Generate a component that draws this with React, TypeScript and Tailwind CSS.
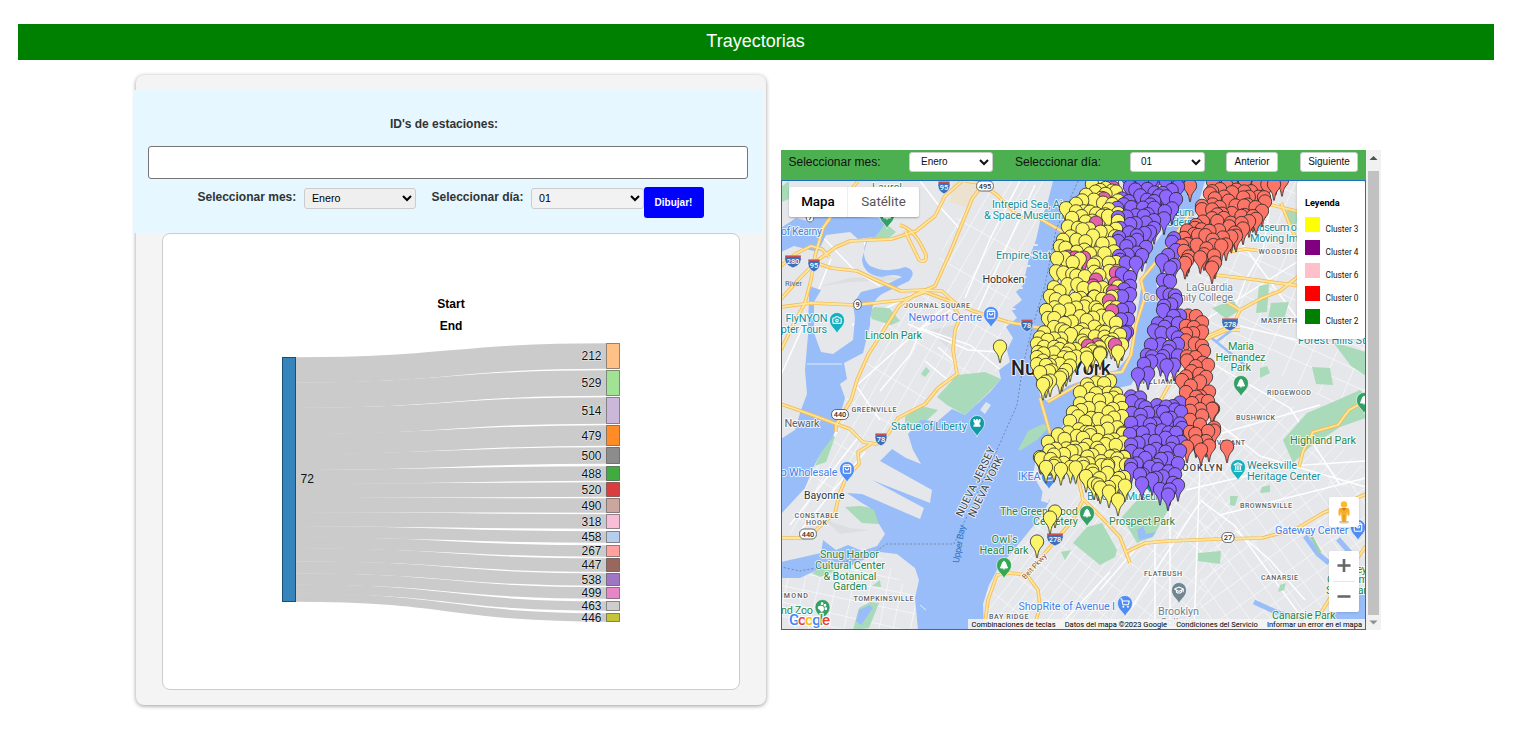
import React from "react";
import { Camera, GraduationCap, Landmark, PawPrint, ShoppingBag, ShoppingCart, TreePine } from "lucide-react";

type Span = [number, number, number];
type Pin = { x: number; y: number; c: string };

const YELLOW = "#fdf569";
const PURPLE = "#8e67fd";
const RED = "#fd7567";
const PINK = "#e661ac";

const nodes: [string, number, number, string][] = [
  ["212", 343.5, 368.5, "#ffc185"],
  ["529", 370.5, 395.5, "#a2e295"],
  ["514", 397.5, 423.5, "#cbb8d9"],
  ["479", 425.5, 445.5, "#ff8c26"],
  ["500", 447.5, 463.5, "#8c8c8c"],
  ["488", 466.5, 480.5, "#41aa41"],
  ["520", 482.5, 496.5, "#da3d3e"],
  ["490", 498.5, 512.5, "#caa69f"],
  ["318", 514.5, 528.5, "#f8bdd7"],
  ["458", 531.5, 542.5, "#b6ceeb"],
  ["267", 545.5, 556.5, "#ffa2a0"],
  ["447", 558.5, 571.5, "#98675d"],
  ["538", 573.5, 585.5, "#9f76c4"],
  ["499", 587.5, 598.5, "#e685c8"],
  ["463", 601.5, 610.5, "#cdcdcd"],
  ["446", 613.5, 621.5, "#c3c438"],
];

function Sankey() {
  const total = nodes.reduce((s, n) => s + n[2] - n[1], 0);
  let at = 357.5;
  const links = nodes.map(([id, a, b]) => {
    const h = ((b - a) * 244) / total;
    const s = at + h / 2;
    const e = (a + b) / 2;
    at += h;
    return <path key={id} d={`M296 ${s}C451 ${s} 451 ${e} 606 ${e}`} fill="none" stroke="#cbcbcb" strokeWidth={h + 0.4} />;
  });
  return (
    <svg className="block h-[284px] w-[342px]" viewBox="280 340 342 284" fontFamily="'Liberation Sans', Arial, sans-serif" fontSize="12">
      {links}
      <rect x="282.5" y="357.5" width="13" height="244" fill="#3585bc" stroke="#165078" />
      <text x="300.5" y="483" fill="#111">72</text>
      {nodes.map(([id, a, b, c]) => (
        <g key={id}>
          <rect x="606.5" y={a} width="13" height={b - a} fill={c} stroke="#000" strokeOpacity="0.42" />
          <text x="601.5" y={(a + b) / 2 + 4.2} textAnchor="end" fill="#111" stroke="#fff" strokeWidth="1.2" strokeOpacity="0.6" paintOrder="stroke">
            {id}
          </text>
        </g>
      ))}
    </svg>
  );
}

const regions: { c: string; rows: Span[] }[] = [
  {
    c: YELLOW,
    rows: [
      [181, 1095, 1112], [188, 1092, 1112], [195, 1086, 1116], [204, 1076, 1118], [212, 1066, 1118], [220, 1072, 1118],
      [230, 1068, 1116], [240, 1063, 1115], [250, 1060, 1114], [262, 1057, 1116], [275, 1056, 1116], [288, 1054, 1118],
      [300, 1050, 1118], [310, 1046, 1116], [320, 1048, 1116], [330, 1044, 1116], [338, 1040, 1120], [346, 1037, 1122],
      [353, 1038, 1100], [360, 1037, 1070], [367, 1037, 1066], [374, 1040, 1062], [382, 1043, 1050],
    ],
  },
  {
    c: YELLOW,
    rows: [
      [381, 1087, 1110], [390, 1080, 1116], [400, 1080, 1120], [410, 1073, 1122], [420, 1070, 1122], [430, 1068, 1123],
      [438, 1058, 1123], [446, 1048, 1123], [454, 1040, 1124], [461, 1041, 1124], [467, 1046, 1126], [476, 1086, 1124], [484, 1094, 1116],
    ],
  },
  {
    c: PURPLE,
    rows: [
      [181, 1128, 1188], [190, 1130, 1178], [199, 1122, 1176], [208, 1117, 1172], [217, 1118, 1164], [226, 1120, 1154],
      [235, 1119, 1150], [244, 1118, 1146], [254, 1119, 1142], [263, 1120, 1136], [275, 1122, 1130], [286, 1124, 1130],
      [298, 1122, 1130], [310, 1122, 1129], [322, 1121, 1128], [334, 1125, 1127],
    ],
  },
  {
    c: PURPLE,
    rows: [
      [242, 1172, 1174], [252, 1168, 1176], [264, 1162, 1174], [284, 1163, 1170], [294, 1163, 1175], [304, 1164, 1176], [314, 1163, 1180], [324, 1158, 1178],
      [334, 1154, 1178], [344, 1151, 1178], [353, 1147, 1178], [362, 1144, 1174], [371, 1138, 1148],
    ],
  },
  {
    c: PURPLE,
    rows: [
      [395, 1131, 1140], [404, 1132, 1180], [413, 1132, 1181], [422, 1131, 1180], [432, 1130, 1182], [442, 1131, 1181],
      [452, 1131, 1180], [462, 1131, 1178], [471, 1131, 1175], [480, 1142, 1173], [488, 1160, 1178],
    ],
  },
  {
    c: RED,
    rows: [
      [181, 1213, 1282], [188, 1212, 1274], [196, 1210, 1264], [204, 1202, 1265], [213, 1202, 1262], [222, 1196, 1256],
      [230, 1187, 1243], [238, 1184, 1236], [246, 1182, 1226], [254, 1184, 1204], [264, 1185, 1187],
    ],
  },
  {
    c: RED,
    rows: [
      [315, 1188, 1196], [324, 1186, 1202], [334, 1186, 1202], [344, 1186, 1202], [354, 1187, 1204], [364, 1187, 1208],
      [374, 1186, 1206], [384, 1182, 1200], [394, 1186, 1209], [404, 1192, 1208], [413, 1190, 1212], [422, 1190, 1200], [431, 1190, 1214], [440, 1196, 1206],
    ],
  },
];

const singles: Pin[] = [
  ...[[1000, 347], [1055, 512], [1050, 518], [1037, 542], [1118, 352], [1100, 353], [1087, 358], [1070, 366], [1060, 378], [1046, 382], [1098, 485], [1109, 492], [1118, 500], [1125, 486]].map(([x, y]) => ({ x, y, c: YELLOW })),
  ...[[1113, 188], [1104, 199], [1096, 223], [1068, 257], [1075, 258], [1084, 258], [1096, 280], [1093, 286], [1116, 273], [1115, 284], [1094, 297], [1113, 292], [1109, 301], [1112, 311], [1088, 346], [1097, 345], [1115, 345]].map(([x, y]) => ({ x, y, c: PINK })),
  ...[[1168, 495], [1190, 186]].map(([x, y]) => ({ x, y, c: x < 1180 ? PURPLE : RED })),
  ...[[1214, 256], [1215, 263], [1212, 268], [1187, 447], [1201, 450], [1209, 446], [1227, 447], [1213, 409], [1214, 431]].map(([x, y]) => ({ x, y, c: RED })),
];

function buildPins(): Pin[] {
  let seed = 17;
  const rnd = () => {
    seed = (seed * 16807) % 2147483647;
    return seed / 2147483647 - 0.5;
  };
  const out: Pin[] = [];
  for (const { c, rows } of regions) {
    for (const [y, a, b] of rows) {
      const n = Math.max(1, Math.round((b - a) / 8));
      for (let i = 0; i <= n; i++) {
        const edge = i === 0 || i === n;
        out.push({ x: a + ((b - a) * i) / n + (edge ? 0 : rnd() * 6), y: y + rnd() * 8, c });
      }
    }
  }
  return [...out, ...singles].sort((p, q) => p.y - q.y);
}
const pins = buildPins();

const water = [
  "M1053 181L1047 205L1040 222L1036 240L1029 258L1023 285L1016 292L1022 300L1011 309L1017 318L1006 327L1013 338L1007 350L1010 362L999 370L1001 379L990 392L965 415L952 409L938 421L921 420L908 434L913 450L921 464L906 458L892 449L880 461L932 490L930 503L872 480L924 508L920 519L862 494L847 493L862 503L874 510L879 524L885 534L877 546L862 551L848 545L836 550L823 540L821 553L781 562V578L800 578L817 570L850 566L880 552L897 554L915 568L919 580L915 598L918 630H984L983 604L989 585L997 570L1012 552L1026 535L1042 515L1050 500L1042 491L1033 475L1036 459L1050 444L1065 423L1082 399L1110 390L1131 385L1142 366L1157 336L1162 310L1156 282L1171 261L1191 228L1205 181H1183L1168 225L1150 251L1142 282L1136 321L1129 356L1117 370L1100 374L1068 386L1048 402L1040 396L1037 370L1047 335L1055 300L1062 256L1073 220L1090 181Z",
  "M781 228L796 218L812 222L821 207L828 214L842 217L858 217L878 218L887 222L875 237L858 239L850 232L826 235L818 252L794 246L781 252Z",
  "M868 238Q859 256 870 266Q887 274 905 267Q918 270 909 281L884 293Q870 299 870 325L863 353L844 363L847 379L840 384L845 398L839 419L833 437L822 451L814 466L805 488L781 514V439L795 430L801 410L807 394L805 370L808 335L808 321L809 302L809 286L821 290L814 302L814 333L821 352L833 354L853 340L855 318L853 304L861 292L881 287L902 277Q894 273 882 277Q863 275 862 259Z",
];

const parks = [
  "M937 397L957 375L985 372L1001 379L988 393L965 415L947 405Z",
  "M905 417L921 406L938 410L926 421L905 429Z", "M868 311L875 307L889 308L900 321L891 325L872 319Z",
  "M869 240L886 224L896 232L888 239Z", "M845 507L860 506L879 509L879 524L862 523Z",
  "M829 434L835 437L826 462L815 466Z", "M921 374L926 367L930 371L925 377Z",
  "M853 630L859 608L870 602L879 603L869 628Z", "M812 573L824 566L835 571L820 577Z", "M872 586L880 580L881 587Z",
  "M1073 543L1087 527L1102 523L1117 550L1115 557L1100 565Z", "M1137 500L1160 490L1168 510L1153 537L1137 543L1122 517Z",
  "M1283 440L1307 413L1333 402L1360 390L1366 396V418L1340 427L1310 447L1293 463Z",
  "M1312 367L1330 368L1333 385L1316 384Z", "M1333 342L1366 352V376L1351 366Z", "M1212 308L1233 300L1240 310L1226 319Z",
  "M1259 286L1269 284L1267 312L1256 313Z", "M1271 303L1289 302L1283 323L1268 319Z", "M1198 553L1221 551L1220 564L1198 561Z",
  "M1230 496L1238 496L1235 506L1230 505Z", "M1262 487L1270 485L1270 492L1260 493Z", "M1260 368L1267 366L1270 373L1260 378Z",
  "M1286 211L1300 211V224L1289 227Z", "M781 187L789 181V199L781 202Z", "M1125 181H1140L1136 189L1125 195Z",
  "M1061 552L1071 550L1065 560Z", "M1280 585L1286 583L1284 590L1278 592Z",
];

const highways = [
  "M858 181L837 208L823 228L815 256L811 280L805 303L794 323L781 350", "M962 181L945 196L935 216L916 231L892 239L850 241L836 247L818 260L800 278L781 299",
  "M814 262L831 268L857 271L876 280L901 291L925 290L942 291L955 303L973 311L1008 322L1052 330", "M781 266L795 254L811 246L822 249L829 257",
  "M900 225Q915 229 926 255Q927 264 919 260L905 231", "M781 307L811 303L855 305L903 300L925 292L952 302",
  "M985 181L972 199L961 226L949 255L935 286L916 294L899 306L885 328L868 355L857 380L851 400L836 425L836 432",
  "M781 404L815 416L850 429L863 442L876 444L888 434L898 418L925 404L938 388L957 374L953 350L955 330L960 317L951 303",
  "M871 444L858 452L859 464L846 478L839 495L835 513L816 530L804 538L781 538",
  "M966 181L980 183L997 195L1020 218L1037 217L1063 232", "M1040 398L1050 433", "M1048 402L1074 387L1102 374L1122 372L1131 355L1136 325L1145 297L1141 280L1165 251L1190 213",
  "M1068 460L1078 477L1083 500L1073 520L1055 541L1027 575L1010 573L997 575L988 600L984 630", "M1027 575L1038 590L1040 607L1033 630",
  "M1082 498L1103 519L1120 537L1130 563", "M1126 552L1145 543L1168 541L1220 539L1262 538L1296 529L1323 513L1366 494",
  "M1141 445L1150 419L1174 376L1195 341L1215 333L1233 325L1240 310L1221 299", "M1240 310L1262 298L1280 291L1300 275",
  "M1177 263L1217 254L1245 249L1262 251", "M1207 274L1250 279L1300 286", "M1260 202L1300 212", "M1281 203L1291 228L1298 242",
  "M1299 467L1303 451L1313 432L1338 425L1349 410L1366 401", "M1315 622L1332 595L1366 546", "M1204 340L1227 330H1240",
];

type LabelRow = [string, number, number, number, string, number?];
const TEAL = "#168f9b";
const GREEN = "#25894a";
const BLUE = "#4681e8";
const GREY = "#5f6368";
const SLATE = "#718391";
const labels: LabelRow[] = [
  ["Laurel", 872, 191, 30, GREEN], ["of Kearny", 781, 235, 41, "#4d83ce", 10.6], ["Intrepid Sea, Air", 992, 208, 74, TEAL], ["& Space Museum", 984, 218.5, 80, TEAL],
  ["Empire State", 996, 259, 61, TEAL], ["Hoboken", 982.5, 282.5, 42, "#333", 10.8], ["Newport Centre", 908.5, 321, 73.5, BLUE],
  ["Lincoln Park", 865, 338.5, 57, GREEN], ["FlyNYON", 785.5, 322, 42, TEAL], ["opter Tours", 775, 332.5, 52, TEAL], ["Newark", 784.5, 427, 35, GREY],
  ["Statue of Liberty", 891, 430, 76, TEAL], ["co Wholesale", 775, 475.5, 62.5, BLUE], ["Bayonne", 804, 499, 40.5, "#333", 10.5], ["Snug Harbor", 820, 558, 59, GREEN],
  ["Cultural Center", 815, 568.5, 70, GREEN], ["& Botanical", 823.5, 579.5, 53, GREEN], ["Garden", 833, 590, 34, GREEN], ["nd Zoo", 781, 614, 32, GREEN],
  ["IKEA", 1018, 479.5, 22.5, BLUE], ["The Green-Wood", 1000, 515, 78, GREEN], ["Cemetery", 1033, 525, 45, GREEN], ["Owl's", 991.5, 543, 26, GREEN],
  ["Head Park", 979.5, 553.5, 49, GREEN], ["ShopRite of Avenue I", 1018.5, 610, 96.5, BLUE], ["Brooklyn Museum", 1087, 499.5, 78, TEAL], ["Prospect Park", 1109, 525, 66, GREEN],
  ["Brooklyn", 1158, 615, 41, SLATE], ["College", 1160, 626, 36, SLATE], ["Weeksville", 1247, 469, 50, TEAL], ["Heritage Center", 1247, 479.5, 73.5, TEAL],
  ["Highland Park", 1290, 443.5, 66, GREEN], ["Maria", 1228, 350, 26, GREEN], ["Hernandez", 1215.5, 360.5, 50, GREEN], ["Park", 1230.5, 371, 20.5, GREEN],
  ["Forest Hills Stadium", 1298, 344, 98, TEAL], ["LaGuardia", 1186, 290.5, 47, SLATE], ["Community College", 1143, 301, 90, SLATE], ["Museum of", 1250, 231, 50, TEAL],
  ["Moving Image", 1250, 241.5, 65, TEAL], ["Museum", 1156, 216, 38, TEAL], ["Modern", 1158, 226, 35, TEAL], ["Gateway Center", 1275, 534, 73.5, BLUE],
  ["Canarsie Park", 1272, 619, 63.5, GREEN], ["Shirley", 1338, 573, 29, GREEN], ["Chisholm", 1327, 583, 41, GREEN], ["State Park", 1326, 594, 46, GREEN],
];
const caps: LabelRow[] = [
  ["JOURNAL SQUARE", 904, 307.5, 66, GREY], ["GREENVILLE", 851.5, 412, 45, GREY], ["CONSTABLE", 794.5, 518, 44, GREY], ["HOOK", 806, 524.5, 21, GREY],
  ["RICHMOND", 763, 597.5, 45, GREY], ["TOMPKINSVILLE", 853.5, 601, 60, GREY], ["BAY RIDGE", 989, 619, 39.5, GREY], ["FLATBUSH", 1144, 576, 38, GREY],
  ["WILLIAMSBURG", 1139, 384, 60, GREY], ["STUYVESANT", 1198, 444.5, 47, GREY], ["RIDGEWOOD", 1267, 395, 44, GREY], ["BUSHWICK", 1236, 420, 39, GREY],
  ["MASPETH", 1261, 323, 36, GREY], ["WOODSIDE", 1258.5, 254, 40, GREY], ["BROWNSVILLE", 1240, 507.5, 52, GREY], ["CANARSIE", 1261, 579.5, 37, GREY],
];

const shields: [string, number, number, boolean][] = [
  ["95", 944, 187, true], ["280", 793, 261, true], ["95", 814, 265, true], ["78", 881, 439, true], ["78", 1027, 325, true], ["278", 1230, 324, true], ["278", 1055, 539, true], ["278", 1245, 193, true],
  ["495", 985, 186, false], ["9", 857.5, 304.5, false], ["440", 840, 414.5, false], ["440", 808, 534, false], ["27", 1228, 537.5, false], ["7", 810, 217, false],
];

type Glyph = typeof Camera | "castle";
const places: [number, number, string, Glyph][] = [
  [837, 320, "#14b0bd", Camera], [991, 314, "#4f8df5", ShoppingBag], [977, 423, "#129aa4", "castle"], [847, 469, "#4f8df5", ShoppingBag], [1074, 206, "#129aa4", Landmark],
  [1241, 383, "#34a065", TreePine], [1238, 467, "#16b0bf", Landmark], [1087, 513, "#34a065", TreePine], [1004, 565, "#34a853", TreePine], [1125, 603, "#4f8df5", ShoppingCart],
  [1179, 590, "#708692", GraduationCap], [822.5, 607, "#34a065", PawPrint], [1358, 527, "#4f8df5", ShoppingBag], [1364, 400, "#34a065", TreePine], [887, 215, "#34a065", TreePine], [1049, 476, "#4f8df5", ShoppingBag], [1150, 480, "#129aa4", Landmark],
];

function streets(x0: number, y0: number, angle: number, gx: number, gy: number, n: number) {
  let d = "";
  for (let i = -n; i <= n; i++) {
    d += `M${i * gx} ${-n * gy}L${i * gx + (i % 3) * 2} ${n * gy}`;
    d += `M${-n * gx} ${i * gy}L${n * gx} ${i * gy + (i % 2) * 4}`;
  }
  return <path d={d} transform={`translate(${x0} ${y0}) rotate(${angle})`} />;
}

function MapDrawing() {
  return (
    <svg className="block h-[448px] w-[583px]" viewBox="782 181 583 448" fontFamily="Roboto, sans-serif">
      <defs>
        <clipPath id="jersey"><path d="M858 370L885 320L925 292L972 181H1053L1010 305L1005 370L950 380L880 435L850 470L790 540V520Z" /></clipPath>
        <clipPath id="staten"><path d="M781 578L880 555L915 600V630H781Z" /></clipPath>
        <clipPath id="brooklyn"><path d="M1020 540L1090 480L1230 460V630H984V590Z" /></clipPath>
        <clipPath id="bushwick"><path d="M1150 385L1215 335L1366 470V490L1200 465Z" /></clipPath>
        <clipPath id="queens"><path d="M1190 235L1210 181H1366V420L1205 335Z" /></clipPath>
        <clipPath id="canarsie"><path d="M1200 465L1366 480V590L1310 629H1200Z" /></clipPath>
      </defs>
      <rect x="781" y="180" width="586" height="450" fill="#e5e7eb" />
      <path d="M953 181H981L966 207L950 202Z" fill="#ede1cf" />
      <path d="M815 287L850 278L888 276L910 280L850 282ZM930 330L955 325L950 350ZM825 520L850 528L870 530L840 534Z" fill="#dcdee2" />
      <g stroke="#fff" strokeWidth="0.8" strokeOpacity="0.65" fill="none">
        <g clipPath="url(#jersey)">{streets(930, 350, 30, 13, 42, 9)}</g>
        <g clipPath="url(#staten)">{streets(850, 600, 12, 16, 15, 8)}</g>
        <g clipPath="url(#brooklyn)">{streets(1080, 560, 38, 10, 26, 12)}</g>
        <g clipPath="url(#bushwick)">{streets(1255, 400, 43, 11, 21, 12)}</g>
        <g clipPath="url(#queens)">{streets(1280, 270, 24, 21, 19, 8)}</g>
        <g clipPath="url(#canarsie)">{streets(1280, 550, -36, 16, 20, 10)}</g>
        <g strokeWidth="1.4" strokeOpacity="1">
          <path d="M781 375L812 306L831 259M816 230L855 271L880 286M865 245L858 215M920 181L940 207L961 230M1020 181L991 237L965 298M1035 185L996 270L978 310M781 500L838 430M790 525L860 435M801 530L865 452M857 387L880 420M857 385L950 302M880 391L910 355L922 328L951 310M920 328L970 345L1001 370M908 324L968 350L999 352M925 361L955 386M938 347L958 365M852 325L920 291" />
          <path d="M1100 590L1165 515M1130 610L1200 502M1060 625L1110 572M1155 540V630M1170 500V630M1200 465L1194 630M1186 490L1250 475M1230 470L1366 461M1200 500L1235 526L1310 629M1220 515L1366 478M1235 530L1270 560L1305 600M1190 401L1260 456L1366 487M1205 438L1320 405M1215 365L1290 408L1340 485M1210 290L1236 305L1245 281L1263 250L1274 181M1205 320L1297 262M1232 230L1297 318M1240 326L1297 340M1211 283L1232 238" />
        </g>
      </g>
      {parks.map((d) => <path key={d} d={d} fill="#a9dab9" />)}
      <path d="M1209 336L1239 360L1250 370M1216 342L1232 330" stroke="#9bbef7" strokeWidth="2.5" fill="none" />
      {water.map((d) => <path key={d} d={d} fill="#99bdf8" />)}
      <path d="M859 610L870 605L873 608L861 625L856 621Z" fill="#99bdf8" />
      <path d="M1137 530L1143 526L1146 534L1156 532L1152 537L1139 540Z" fill="#99bdf8" />
      <path d="M1305 536L1318 554L1329 563M1338 539L1353 556M1254 602L1278 613L1305 620" stroke="#99bdf8" strokeWidth="5" fill="none" />
      <path d="M1325 625L1340 600L1366 590V629Z" fill="#99bdf8" />
      <path d="M1305 536L1316 557M1326 561L1350 580" stroke="#9bd0b0" strokeWidth="3" fill="none" transform="translate(4 -4)" />
      <path d="M1018 450L1028 431L1043 424L1049 427L1037 440L1021 450Z" fill="#a9dab9" />
      <path d="M980 410L986 402L991 405L985 414ZM975 428L980 425L982 430Z" fill="#dfe5eb" />
      <path d="M1043 489L1058 481L1073 485L1062 496L1052 491L1048 503L1041 501Z" fill="#e5e7eb" />
      <path d="M1046 468L1060 474L1070 472L1074 480" stroke="#99bdf8" strokeWidth="3" fill="none" />
      <g stroke="#fff" strokeWidth="0.7" fill="none">
        <path d="M807 364H842M920 605L926 610" />
        {[245, 255, 266, 277, 288, 299, 309, 320, 331, 342].map((y) => (
          <path key={y} d={`M${1043 - (y - 230) * 0.35} ${y}h-9`} stroke="#e5e7eb" strokeWidth="2" />
        ))}
      </g>
      <g fill="none" strokeLinejoin="round">
        <g stroke="#f5bd5a" strokeWidth="3.6">{highways.map((d) => <path key={d} d={d} />)}</g>
        <g stroke="#fee69b" strokeWidth="1.8">{highways.map((d) => <path key={d} d={d} />)}</g>
      </g>
      <path d="M1078 181L1056 230L1045 285L1033 325L1023 365L1017 405L997 450L963 525L954 544H886L870 556L821 567L800 571L781 567" stroke="#687b96" strokeWidth="0.8" strokeDasharray="2 2" fill="none" />
      {places.map(([x, y, c, Icon], i) => (
        <g key={i}>
          <path d={`M${x} ${y + 14}c-1-5-7.5-7-7.5-14a7.5 7.5 0 1 1 15 0c0 7-6.500 9-7.500 14z`} fill={c} stroke="#fff" strokeWidth="0.6" />
          {Icon === "castle" ? (
            <path transform={`translate(${x} ${y})`} d="M-3.500 -4h1.600v1.300h1.100V-4h1.600v1.300h1.100V-4h1.600v3l-1 .7v2.100h1v1.900h-7V1.800h1v-2.100l-1-.7z" fill="#fff" />
          ) : (
            <Icon x={x - 5} y={y - 5} width={10} height={10} color="#fff" strokeWidth={2.6} fill={Icon === TreePine || Icon === PawPrint ? "#fff" : "none"} />
          )}
        </g>
      ))}
      {shields.map(([t, x, y, inter], i) => {
        const w = t.length * 2.3 + 1;
        return (
          <g key={i}>
            {inter ? (
              <>
                <path d={`M${x - w} ${y - 5.5}h${w * 2}q2.500 8.500-${w} 12.500q-${w + 2.5}-4-${w}-12.500z`} fill="#3d6fb7" stroke="#fff" strokeWidth="0.6" />
                <path d={`M${x - w} ${y - 4.8}h${w * 2}`} stroke="#cc5050" strokeWidth="1.500" />
              </>
            ) : (
              <rect x={x - w - 0.5} y={y - 5} width={w * 2 + 1} height="10" rx="4.500" fill="#fff" stroke="#55595e" strokeWidth="0.9" />
            )}
            <text x={x} y={y + (inter ? 3 : 2.6)} fontSize="7.400" fontWeight="500" textAnchor="middle" fill={inter ? "#fff" : "#333"}>{t}</text>
          </g>
        );
      })}
      <g stroke="#fff" strokeWidth="2" strokeOpacity="0.75" strokeLinejoin="round" paintOrder="stroke">
        {labels.map(([t, x, y, w, c, s]) => <text key={t + y} x={x} y={y} textLength={w} fontSize={s ?? 10.9} fill={c}>{t}</text>)}
        {caps.map(([t, x, y, w, c]) => <text key={t} x={x} y={y} textLength={w} fontSize="7.100" fontWeight="500" fill={c}>{t}</text>)}
        <text x="1168" y="471" textLength="54.500" fontSize="9.500" fontWeight="500" fill="#444">BROOKLYN</text>
        <text x="785" y="286" fontSize="7.400" fill="#386cab" stroke="none" textLength="17">River</text>
        <text transform="translate(976 482) rotate(-64)" textAnchor="middle" y="3" fontSize="10.500" textLength="76" fill="#444">NUEVA JERSEY</text>
        <text transform="translate(986 487) rotate(-64)" textAnchor="middle" y="3" fontSize="10.500" textLength="66" fill="#444">NUEVA YORK</text>
        <text transform="translate(959 544) rotate(-80)" textAnchor="middle" y="3" fontSize="9" textLength="38" fill="#2f6fc0" stroke="none">Upper Bay</text>
        <text transform="translate(1034 566) rotate(-47)" textAnchor="middle" y="3" fontSize="7.500" textLength="32" fill="#8a5635">Belt Pkwy</text>
        <text x="1011" y="375" fontSize="19.500" fontWeight="500" textLength="100" fill="#202124">Nueva York</text>
      </g>
      <g stroke="#222" strokeOpacity="0.78" strokeWidth="1">
        {pins.map((p, i) => (
          <path key={i} transform={`translate(${p.x.toFixed(1)} ${p.y.toFixed(1)})`} d="M0 16C-.8 16-.6 11-2.500 7.500C-4.200 4.500-6.700 3.500-6.700-.4A6.700 6.700 0 1 1 6.700-.4C6.700 3.500 4.200 4.500 2.500 7.500C.6 11 .8 16 0 16Z" fill={p.c} />
        ))}
      </g>
      <text x="789" y="625" fontSize="15" fontWeight="500" textLength="41" stroke="#fff" strokeWidth="2.500" strokeLinejoin="round" paintOrder="stroke">
        <tspan fill="#4285f4">G</tspan><tspan fill="#ea4335">o</tspan><tspan fill="#fbbc05">o</tspan><tspan fill="#4285f4">g</tspan><tspan fill="#34a853">l</tspan><tspan fill="#ea4335">e</tspan>
      </text>
    </svg>
  );
}

const legend = [
  ["Cluster 3", "bg-[#ffff00]"],
  ["Cluster 4", "bg-[#800080]"],
  ["Cluster 6", "bg-[#ffc0cb]"],
  ["Cluster 0", "bg-[#ff0000]"],
  ["Cluster 2", "bg-[#008000]"],
];

function Months({ className }: { className: string }) {
  return (
    <select className={className} defaultValue="Enero">
      <option>Enero</option>
    </select>
  );
}

function Days({ className }: { className: string }) {
  return (
    <select className={className} defaultValue="01">
      <option>01</option>
    </select>
  );
}

export default function App() {
  return (
    <div className="h-[756px] w-[1533px] overflow-hidden bg-white pt-6 font-['Liberation_Sans',Arial,sans-serif] text-black">
      <header className="ml-[18px] flex h-9 w-[1476px] items-center justify-center bg-[#008000] pb-0.5 pr-px text-[18px] text-white">Trayectorias</header>
      <main className="ml-[136px] mt-[15px] flex items-start gap-[15px]">
        <section className="h-[630px] w-[630px] shrink-0 rounded-lg bg-[#f4f4f4] pt-[15px] shadow-[0_1px_4px_rgba(0,0,0,0.4)]">
          <form className="-ml-[3px] h-[143px] w-[630px] bg-[#e6f7ff] px-[15px] pt-[27px] text-[12px] font-bold text-[#333]">
            <label className="block pr-[8px] text-center leading-[14px]">ID's de estaciones:</label>
            <input className="mt-[15px] block h-[33px] w-[600px] rounded-[3px] border border-[#767676] bg-white" />
            <div className="ml-[49.500px] mt-2 flex items-start">
              <label className="mr-[8px] mt-[3px] w-[98.500px] whitespace-nowrap leading-[14px]">Seleccionar mes:</label>
              <Months className="mt-px h-[21px] w-[112px] rounded-[3px] border border-[#ccc] bg-[#efefef] pb-px pl-[3px] text-[10.670px] font-normal text-black" />
              <label className="ml-[15.500px] mr-[7.500px] mt-[3px] w-[92px] whitespace-nowrap leading-[14px]">Seleccionar día:</label>
              <Days className="mt-px h-[21px] w-[113px] rounded-[3px] border border-[#ccc] bg-[#f2f2f2] pb-px pl-[3px] text-[10.670px] font-normal text-black" />
              <button type="button" className="h-[31px] w-[60px] rounded-[3px] bg-[#0000ff] pr-px text-[10px] font-bold text-white">Dibujar!</button>
            </div>
          </form>
          <div className="ml-[26px] flex h-[457px] w-[578px] flex-col items-center rounded-lg border border-[#ccc] bg-white pt-[63px]">
            <p className="text-[12px] font-bold leading-[14px]">Start</p>
            <p className="mb-[7px] mt-2 text-[12px] font-bold leading-[14px]">End</p>
            <Sankey />
          </div>
        </section>
        <section className="mt-[75px] flex h-[480px] w-[600px] shrink-0">
          <div className="w-[585px]">
            <div className="flex h-[30px] items-start bg-[#4caf50] pl-[7.500px] pt-0.5 text-[12px] text-[#111]">
              <span className="mt-[3px] w-[120.500px] leading-[14px]">Seleccionar mes:</span>
              <Months className="h-5 w-[84px] rounded-[3px] border border-[#ccc] bg-white pb-px pl-[7px] text-[10px]" />
              <span className="ml-[22px] mt-[3px] w-[115px] leading-[14px]">Seleccionar día:</span>
              <Days className="h-5 w-[75px] rounded-[3px] border border-[#ccc] bg-white pb-px pl-[6px] text-[10px]" />
              <button className="ml-[21px] h-5 w-[52px] rounded-[3px] border border-[#ccc] bg-white pb-0.5 text-[10px]">Anterior</button>
              <button className="ml-[22px] h-5 w-[58px] rounded-[3px] border border-[#ccc] bg-white pb-0.5 text-[10px]">Siguiente</button>
            </div>
            <div className="relative h-[450px] w-[585px] overflow-hidden border border-[#1f6fc0] font-[Roboto,sans-serif]">
              <MapDrawing />
              <div className="absolute left-[7px] top-[6px] flex h-[30px] rounded-[2px] bg-white text-[13.400px] shadow-[0_1px_2px_rgba(0,0,0,0.3)]">
                <button className="w-[59px] border-r border-[#eee] pt-px font-medium">Mapa</button>
                <button className="w-[71px] pt-px text-[#565656]">Satélite</button>
              </div>
              <aside className="absolute right-0 top-0 h-[158px] w-[68px] rounded-[3px] bg-white pl-2 pt-[16px] shadow-[0_0_3px_rgba(0,0,0,0.2)]">
                <h2 className="mb-[9px] text-[9.200px] font-bold leading-[11px]">Leyenda</h2>
                {legend.map(([t, c]) => (
                  <div key={t} className="mb-2 flex h-[15px] gap-[5.500px]">
                    <span className={`size-[15px] ${c}`} />
                    <span className="whitespace-nowrap pt-[7px] text-[8.300px] leading-[11px] text-[#111]">{t}</span>
                  </div>
                ))}
              </aside>
              <div className="absolute left-[547px] top-[316px] flex size-[30px] items-center justify-center rounded-[2px] bg-white shadow-sm">
                <svg className="h-[24px] w-[14px]" viewBox="0 0 14 24">
                  <ellipse cx="7" cy="22" rx="5" ry="1.500" fill="#d6c9a8" />
                  <path d="M3.500 8h7q2 0 2 3v4l-1.700 1-.8-4-.8 10H4.800L4 12l-.8 4-1.700-1v-4q0-3 2-3z" fill="#f5ae27" />
                  <circle cx="7" cy="4.500" r="3.200" fill="#f9bc2e" />
                  <path d="M4.500 8h5l-2.500 3z" fill="#db732b" />
                  <path d="M7 15v7" stroke="#db8b2b" strokeWidth=".7" />
                </svg>
              </div>
              <div className="absolute left-[547px] top-[370px] h-[61px] w-[30px] rounded-[2px] bg-white shadow-sm">
                <svg className="block h-[61px] w-[30px]" viewBox="0 0 30 61">
                  <path d="M8.500 14.500h13M15 8v13M8.500 45.500h13" stroke="#666" strokeWidth="2.600" />
                  <path d="M4 30.500h22" stroke="#e6e6e6" />
                </svg>
              </div>
              <footer className="absolute bottom-0 right-0 flex h-[10px] w-[397px] items-center justify-between whitespace-nowrap bg-[#f5f5f5]/85 pl-[3.500px] pr-[3px] pt-px text-[7.500px] leading-[9px] text-black">
                <span>Combinaciones de teclas</span>
                <span>Datos del mapa ©2023 Google</span>
                <span>Condiciones del Servicio</span>
                <span>Informar un error en el mapa</span>
              </footer>
            </div>
          </div>
          <div className="flex w-[15px] flex-col items-center justify-between bg-[#f1f1f1]">
            <svg className="h-[21px] w-[15px]" viewBox="0 0 15 21"><path d="M3.500 10L7.500 6L11.500 10Z" fill="#505050" /></svg>
            <div className="w-[11px] flex-1 bg-[#c1c1c1]" />
            <svg className="h-[15px] w-[15px]" viewBox="0 0 15 15"><path d="M3.500 5.500L7.500 9.500L11.500 5.500Z" fill="#909090" /></svg>
          </div>
        </section>
      </main>
    </div>
  );
}
